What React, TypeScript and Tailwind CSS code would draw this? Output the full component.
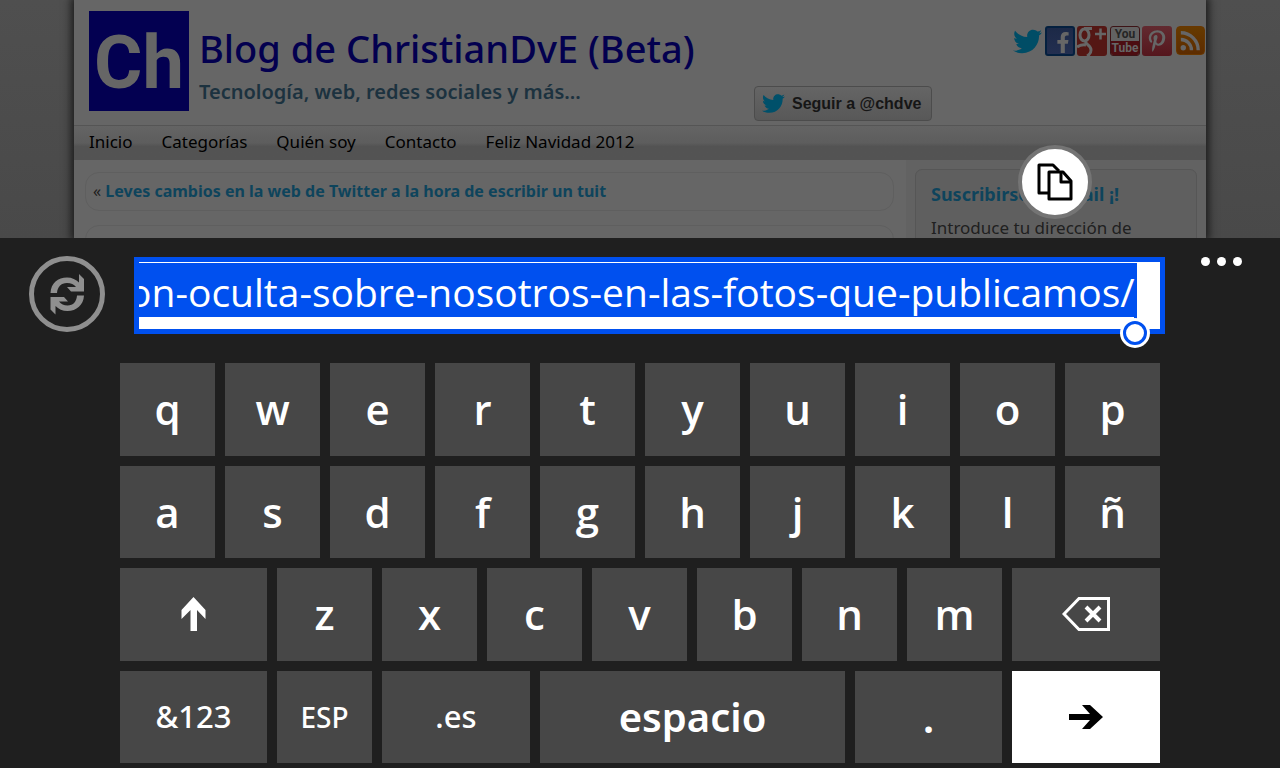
import { useEffect, useRef } from "react";
import { FaFacebookF, FaPinterestP, FaTwitter } from "react-icons/fa";

const NAV = ["Inicio", "Categorías", "Quién soy", "Contacto", "Feliz Navidad 2012"];
const ROW_1 = ["q", "w", "e", "r", "t", "y", "u", "i", "o", "p"];
const ROW_2 = ["a", "s", "d", "f", "g", "h", "j", "k", "l", "ñ"];
const ROW_3 = ["z", "x", "c", "v", "b", "n", "m"];

const KEY =
  "flex min-w-0 basis-0 items-center justify-center bg-[#474747] text-white active:bg-[#0050ef]";

function SocialLinks() {
  return (
    <div className="mr-px flex gap-[2px] pt-[26px]">
      <a href="#twitter" aria-label="Twitter" className="flex size-[30px] items-center justify-center text-[#004d66]">
        <FaTwitter size={29} />
      </a>
      <a
        href="#facebook"
        aria-label="Facebook"
        className="ml-[1px] flex size-[30px] items-end justify-center rounded-[3px] border-2 border-[#04203f] bg-linear-to-b from-[#1c2947] to-[#232f50] pb-px pl-[6px] text-[#666]"
      >
        <FaFacebookF size={21} />
      </a>
      <a href="#google" aria-label="Google+" className="size-[30px] overflow-hidden rounded-[3px] bg-[#541714]">
        <svg viewBox="0 0 30 30" className="size-full" fill="none" stroke="#666">
          <ellipse cx="7.500" cy="9" rx="4.500" ry="6" strokeWidth="3" />
          <path d="M7 2.500h8M9 15c-2 3 5 4 5 9 0 3-2 5-4 6M0 21c3-2 6-2.500 9-2" strokeWidth="3" />
          <path d="M18 8h11M23.500 2.500v11" strokeWidth="2.500" />
        </svg>
      </a>
      <a
        href="#youtube"
        aria-label="YouTube"
        className="ml-[1px] flex size-[30px] flex-col overflow-hidden rounded-[3px] border border-[#3d1416] bg-[#626262] text-center font-['Roboto',sans-serif] text-[12px] leading-[14px] font-bold"
      >
        <span className="text-[#252525]">You</span>
        <span className="bg-[#4c0d11] text-[#666]">Tube</span>
      </a>
      <a
        href="#pinterest"
        aria-label="Pinterest"
        className="flex size-[30px] items-center justify-center rounded-[3px] bg-linear-to-b from-[#622a30] to-[#55161d] text-[#666]"
      >
        <FaPinterestP size={22} />
      </a>
      <a
        href="#rss"
        aria-label="RSS"
        className="ml-[2px] size-[29px] overflow-hidden rounded-[4px] border border-[#693700] bg-linear-to-b from-[#663a00] to-[#5d2c00]"
      >
        <svg viewBox="0 0 28 28" className="size-full" fill="none" stroke="#666" strokeWidth="3.500">
          <circle cx="6.500" cy="21.500" r="2.800" fill="#666" stroke="none" />
          <path d="M4 13a11 11 0 0 1 11 11M4 6a18 18 0 0 1 18 18" />
        </svg>
      </a>
    </div>
  );
}

function BlogPage() {
  return (
    <main className="relative h-[238px] overflow-hidden bg-linear-to-b from-[#4f4f4f] to-[#494949] px-[74px] font-['Noto_Sans',sans-serif]">
      <div className="h-full bg-[#666] shadow-[0_0_8px_3px_#1c1c1c]">
        <header className="flex h-[125px] pl-[15px]">
          <div className="mt-[11px] flex size-[100px] items-center justify-center bg-[#030051] pt-1 font-['Roboto',sans-serif] text-[74px] leading-none font-bold text-[#666]">
            Ch
          </div>
          <div className="ml-[10px] flex-1 whitespace-nowrap">
            <h1 className="mt-6 text-[38px] leading-[48px] font-medium text-[#03004f]">Blog de ChristianDvE (Beta)</h1>
            <p className="mt-[6px] text-[20px] leading-7 font-semibold text-[#1c323f]">
              Tecnología, web, redes sociales y más...
            </p>
          </div>
          <button className="mt-[86px] mr-20 flex h-[35px] w-[178px] items-center gap-[7px] rounded-[4px] border border-[#4c4c4c] bg-linear-to-b from-[#656565] to-[#585858] pl-[7px] font-['Liberation_Sans',sans-serif] text-base font-bold whitespace-nowrap text-[#161616]">
            <FaTwitter size={23} className="shrink-0 text-[#00506a]" />
            Seguir a @chdve
          </button>
          <SocialLinks />
        </header>
        <nav className="flex h-[35px] gap-[29px] border-t border-[#555] bg-linear-to-b from-[#646464] via-[#5d5d5d] via-50% to-[#535353] to-60% pl-[15px] text-[17px] leading-8 text-black">
          {NAV.map((item) => (
            <a key={item} href="#menu">
              {item}
            </a>
          ))}
        </nav>
        <div className="flex">
          <div className="flex-1 pt-3 pr-3 pl-[11px]">
            <div className="h-[39px] rounded-[14px] border border-[#5f5f5f] pl-[7px] text-[16px] leading-9 text-[#1c1c1c]">
              «{" "}
              <a href="#anterior" className="font-bold text-[#0e445c]">
                Leves cambios en la web de Twitter a la hora de escribir un tuit
              </a>
            </div>
            <div className="mt-[14px] h-10 rounded-[14px] border border-[#5f5f5f]" />
          </div>
          <aside className="w-[300px] bg-[#626262] px-[9px] pt-[9px]">
            <div className="h-24 rounded-[7px] border border-[#565656] bg-[#5f5f5f] px-[15px] pt-2">
              <h2 className="text-[18px] leading-8 font-bold text-[#0e445c]">Suscribirse al email ¡!</h2>
              <p className="mt-2 text-[17px] leading-5 text-[#202020]">Introduce tu dirección de</p>
            </div>
          </aside>
        </div>
      </div>
      <button
        aria-label="Copiar"
        className="absolute top-[145px] left-[1018px] flex size-[74px] items-center justify-center rounded-full border-[4px] border-[#747474] bg-white"
      >
        <svg width="36" height="38" viewBox="0 0 36 38" fill="none" stroke="#000" strokeWidth="3" strokeLinejoin="round">
          <path d="M11 30H2V2h14l6 6" />
          <path d="M12 9h14l8 9v18H12z" fill="#fff" />
          <path d="M24 9v10h10" />
        </svg>
      </button>
    </main>
  );
}

function AddressBar() {
  const input = useRef<HTMLInputElement>(null);

  // keep the end of the address in view
  useEffect(() => {
    if (input.current) input.current.scrollLeft = input.current.scrollWidth;
  }, []);

  return (
    <div className="flex h-[125px] pt-[19px]">
      <div className="w-[134px] shrink-0">
        <button aria-label="Actualizar" className="-mt-px ml-[29px] size-[76px]">
          <svg viewBox="0 0 76 76" className="size-full" fill="#8f8f8f">
            <circle cx="38" cy="38" r="35.500" fill="none" stroke="#8f8f8f" strokeWidth="5" />
            <path d="M21.500 37C22 27 29 21.500 38 21.500c5 0 9 2 12 5l0-8.500 5 5V35.500H42l-4-4.500h9c-2-2.500-5-4-9-4-6 0-9.500 4-10 10z" />
            <path d="M55 39.500C54.500 49 47.500 55 38.500 55c-5 0-9-2-12-5v8.500l-5-5V41H35l4 4.500h-9c2 2.500 5 4 8.500 4 6 0 9-4 9.500-10z" />
          </svg>
        </button>
      </div>
      <div className="relative h-[77px] min-w-0 flex-1 border-[5px] border-[#0050ef] bg-white pt-px pr-[23px]">
        <input
          ref={input}
          aria-label="Dirección"
          defaultValue="on-oculta-sobre-nosotros-en-las-fotos-que-publicamos/"
          className="block h-[54px] w-full bg-[#0050ef] pt-1 pr-[2px] font-['Open_Sans',sans-serif] text-[39px] text-white outline-none"
        />
        <div className="absolute right-[23px] bottom-0 h-3 w-[3px] bg-[#0050ef]" />
        <div className="absolute right-[10px] -bottom-[19px] size-[30px] rounded-full bg-white p-[3px]">
          <div className="size-full rounded-full border-[3px] border-[#0050ef]" />
        </div>
      </div>
      <div className="w-[115px] shrink-0">
        <button aria-label="Más opciones" className="ml-9 flex gap-[7px]">
          <span className="size-[9px] rounded-full bg-white" />
          <span className="size-[9px] rounded-full bg-white" />
          <span className="size-[9px] rounded-full bg-white" />
        </button>
      </div>
    </div>
  );
}

function Letters({ keys }: { keys: string[] }) {
  return (
    <>
      {keys.map((k) => (
        <button key={k} className={`${KEY} grow-95`}>
          {k}
        </button>
      ))}
    </>
  );
}

function Keyboard() {
  return (
    <div className="mx-[120px] flex flex-1 flex-col gap-[10px] pb-[5px] text-[42px] leading-none font-semibold">
      <div className="flex flex-1 gap-[10px]">
        <Letters keys={ROW_1} />
      </div>
      <div className="flex flex-1 gap-[10px]">
        <Letters keys={ROW_2} />
      </div>
      <div className="flex flex-1 gap-[10px]">
        <button aria-label="Mayúsculas" className={`${KEY} grow-147`}>
          <svg width="26" height="34" viewBox="0 0 26 34" fill="#fff">
            <path d="M12.500 0 24.500 13v9L16 13V34H9.500V13L.5 22v-9z" />
          </svg>
        </button>
        <Letters keys={ROW_3} />
        <button aria-label="Borrar" className={`${KEY} grow-148`}>
          <svg width="48" height="34" viewBox="0 0 48 34" fill="none" stroke="#fff">
            <path d="M2 17 17 1.500h29.500v31H17z" strokeWidth="3" />
            <path d="m24 10 14 14M38 10 24 24" strokeWidth="4" />
          </svg>
        </button>
      </div>
      <div className="flex flex-1 gap-[10px] font-['Noto_Sans',sans-serif]">
        <button className={`${KEY} grow-147 text-[31px] font-medium`}>&amp;123</button>
        <button className={`${KEY} grow-95 text-[28px] font-medium`}>ESP</button>
        <button className={`${KEY} grow-148 text-[31px] font-medium`}>.es</button>
        <button className={`${KEY} grow-305 text-[40px]`}>espacio</button>
        <button className={`${KEY} grow-147`}>.</button>
        <button aria-label="Ir" className="flex min-w-0 grow-148 basis-0 items-center justify-center bg-white">
          <svg width="34" height="24" viewBox="0 0 34 24">
            <path d="M0 9h21L13 0h8l13 12-13 12h-8l8-9H0z" />
          </svg>
        </button>
      </div>
    </div>
  );
}

export default function App() {
  return (
    <div className="flex min-h-screen flex-col bg-[#1f1f1f] font-['Open_Sans',sans-serif]">
      <BlogPage />
      <AddressBar />
      <Keyboard />
    </div>
  );
}
